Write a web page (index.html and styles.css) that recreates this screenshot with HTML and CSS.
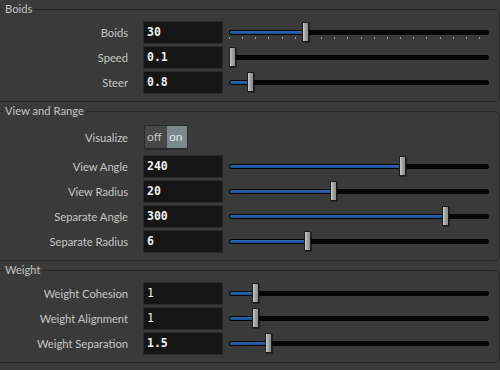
FILE: index.html
```html
<html>
  <head>
    <link rel="stylesheet" href="styles.css">
  </head>
  <body>
    <fieldset class="group">
      <legend>Boids</legend>
      <div class="row">
        <label>Boids</label>
        <div class="value">30</div>
        <div class="slider" style="--p: 0.287">
          <div class="track"><div class="fill"></div></div>
          <div class="ticks">
            <span></span><span></span><span></span><span></span><span></span>
            <span></span><span></span><span></span><span></span><span></span>
            <span></span><span></span><span></span><span></span><span></span>
            <span></span><span></span><span></span><span></span><span></span>
          </div>
          <div class="handle"></div>
        </div>
      </div>
      <div class="row">
        <label>Speed</label>
        <div class="value">0.1</div>
        <div class="slider" style="--p: 0.001">
          <div class="track"><div class="fill"></div></div>
          <div class="handle"></div>
        </div>
      </div>
      <div class="row">
        <label>Steer</label>
        <div class="value">0.8</div>
        <div class="slider" style="--p: 0.07">
          <div class="track"><div class="fill"></div></div>
          <div class="handle"></div>
        </div>
      </div>
    </fieldset>

    <fieldset class="group">
      <legend>View and Range</legend>
      <div class="row toggle-row">
        <label>Visualize</label>
        <div class="toggle">
          <span class="off">off</span><span class="on">on</span>
        </div>
      </div>
      <div class="row">
        <label>View Angle</label>
        <div class="value">240</div>
        <div class="slider" style="--p: 0.672">
          <div class="track"><div class="fill"></div></div>
          <div class="handle"></div>
        </div>
      </div>
      <div class="row">
        <label>View Radius</label>
        <div class="value">20</div>
        <div class="slider" style="--p: 0.4">
          <div class="track"><div class="fill"></div></div>
          <div class="handle"></div>
        </div>
      </div>
      <div class="row">
        <label>Separate Angle</label>
        <div class="value">300</div>
        <div class="slider" style="--p: 0.841">
          <div class="track"><div class="fill"></div></div>
          <div class="handle"></div>
        </div>
      </div>
      <div class="row">
        <label>Separate Radius</label>
        <div class="value">6</div>
        <div class="slider" style="--p: 0.295">
          <div class="track"><div class="fill"></div></div>
          <div class="handle"></div>
        </div>
      </div>
    </fieldset>

    <fieldset class="group">
      <legend>Weight</legend>
      <div class="row">
        <label>Weight Cohesion</label>
        <div class="value is-default">1</div>
        <div class="slider" style="--p: 0.09">
          <div class="track"><div class="fill"></div></div>
          <div class="handle"></div>
        </div>
      </div>
      <div class="row">
        <label>Weight Alignment</label>
        <div class="value is-default">1</div>
        <div class="slider" style="--p: 0.09">
          <div class="track"><div class="fill"></div></div>
          <div class="handle"></div>
        </div>
      </div>
      <div class="row">
        <label>Weight Separation</label>
        <div class="value">1.5</div>
        <div class="slider" style="--p: 0.143">
          <div class="track"><div class="fill"></div></div>
          <div class="handle"></div>
        </div>
      </div>
    </fieldset>
  </body>
</html>
```

FILE: styles.css
```css
body {
  margin: 0;
  background: #3a3a3a;
  font-family: Lato, "Liberation Sans", sans-serif;
  font-size: 11.2px;
  color: #c6c6c6;
  overflow: hidden;
}
.group {
  margin: 0 0 0 -10px;
  padding: 2px 10px 6px 0;
  border: 1px solid #262626;
  border-radius: 5px;
  min-width: 0;
}
.group legend {
  margin-left: 12px;
  padding: 0 2px;
  line-height: 18px;
  color: #c2c2c2;
}
.row {
  display: flex;
  align-items: center;
  height: 25px;
}
.row label {
  width: 137px;
  margin-right: 15px;
  text-align: right;
}
.value {
  box-sizing: border-box;
  width: 80px;
  height: 23px;
  margin-right: 6px;
  padding-left: 3px;
  background: #151515;
  border: 1px solid #2a2a2a;
  font-family: "DejaVu Sans Mono", monospace;
  font-size: 11.5px;
  font-weight: bold;
  line-height: 21px;
  color: #f0f0f0;
}
.value.is-default {
  font-weight: normal;
}
.slider {
  position: relative;
  width: 260px;
  height: 25px;
}
.track {
  position: absolute;
  left: 0;
  right: 0;
  top: 10px;
  height: 5px;
  background: #050505;
  border-radius: 3px;
}
.fill {
  position: absolute;
  left: 1px;
  top: 1px;
  height: 3px;
  width: calc(var(--p) * (100% - 7px) + 3px);
  background: linear-gradient(#2f68b2, #1a4f96);
  border-radius: 2px;
}
.handle {
  position: absolute;
  top: 2px;
  left: calc(var(--p) * (100% - 7px));
  box-sizing: border-box;
  width: 7px;
  height: 20px;
  border: 1px solid #1c1c1c;
  background: linear-gradient(to right, #cfcfcf, #a4a4a4 40%, #8c8c8c);
  box-shadow: 1px 1px 0 rgba(0, 0, 0, 0.4);
}
.ticks {
  position: absolute;
  left: 0;
  top: 17px;
  width: 251px;
  display: flex;
  justify-content: space-between;
}
.ticks span {
  width: 1px;
  height: 2px;
  background: #9c9c9c;
}
.toggle-row {
  height: 24px;
  margin: 3px 0 5px;
}
.toggle {
  display: flex;
  height: 24px;
  margin-left: 1px;
  border: 1px solid #2a2a2a;
  border-radius: 2px;
  box-sizing: border-box;
  overflow: hidden;
  box-shadow: 0 1px 0 rgba(0, 0, 0, 0.3);
}
.toggle span {
  line-height: 22px;
  padding: 0 2px;
  font-size: 12px;
}
.toggle .off {
  width: 18px;
  background: #474747;
  color: #c4c4c4;
}
.toggle .on {
  width: 16px;
  background: #7c888a;
  color: #dfe6e6;
}
```
